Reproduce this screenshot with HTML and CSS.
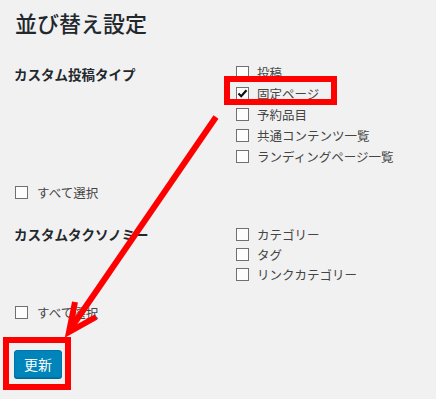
FILE: index.html
```html
<!DOCTYPE html>
<html lang="ja">
<head>
  <meta charset="UTF-8">
  <meta name="viewport" content="width=device-width, initial-scale=1.0">
  <title>並び替え設定</title>
  <link rel="stylesheet" href="styles.css">
</head>
<body>
  <div class="page">
    <h1 class="page-title">並び替え設定</h1>

    <!-- 投稿タイプ -->
    <div class="setting setting-types">
      <div class="setting-label">カスタム投稿タイプ</div>
      <ul class="choices">
        <li><span class="box"></span>投稿</li>
        <li><span class="box checked"><svg viewBox="0 0 13 13" width="13" height="13"><path d="M2.5 6.5 L5.2 9.2 L10.5 3.2" fill="none" stroke="#111" stroke-width="2.2"/></svg></span>固定ページ</li>
        <li><span class="box"></span>予約品目</li>
        <li><span class="box"></span>共通コンテンツ一覧</li>
        <li><span class="box"></span>ランディングページ一覧</li>
      </ul>
    </div>
    <div class="select-all select-all-types"><span class="box"></span>すべて選択</div>

    <!-- タクソノミー -->
    <div class="setting setting-tax">
      <div class="setting-label">カスタムタクソノミー</div>
      <ul class="choices">
        <li><span class="box"></span>カテゴリー</li>
        <li><span class="box"></span>タグ</li>
        <li><span class="box"></span>リンクカテゴリー</li>
      </ul>
    </div>
    <div class="select-all select-all-tax"><span class="box"></span>すべて選択</div>

    <button class="submit">更新</button>

    <!-- 注釈 -->
    <svg class="annotations" viewBox="0 0 436 399" width="436" height="399">
      <rect x="227" y="79" width="107" height="23" fill="none" stroke="#ff0000" stroke-width="6"/>
      <rect x="6" y="340" width="62" height="47" fill="none" stroke="#ff0000" stroke-width="6"/>
      <line x1="216" y1="117" x2="71" y2="328" stroke="#ff0000" stroke-width="6"/>
      <polyline points="75,302 69,332 96,317" fill="none" stroke="#ff0000" stroke-width="6" stroke-linejoin="miter"/>
    </svg>
  </div>
</body>
</html>
```

FILE: styles.css
```css
* {
  margin: 0;
  padding: 0;
  box-sizing: border-box;
}

body {
  font-family: "Noto Sans CJK JP", "Liberation Sans", sans-serif;
  background: #f1f1f1;
  color: #444;
}

.page {
  position: relative;
  width: 436px;
  height: 399px;
  padding: 8px 14px 0;
  overflow: hidden;
}

.page-title {
  font-size: 22px;
  line-height: 28px;
  font-weight: 500;
  color: #23282d;
  padding-left: 1px;
}

.setting {
  display: flex;
}

.setting-types {
  margin-top: 26px;
}

.setting-tax {
  margin-top: 22px;
}

.setting-label {
  width: 222px;
  font-size: 13.5px;
  font-weight: 700;
  color: #23282d;
  line-height: 20px;
}

.setting-types .setting-label {
  padding-top: 2px;
}

.choices {
  list-style: none;
}

.choices li {
  display: flex;
  align-items: center;
  gap: 8px;
  height: 20px;
  font-size: 12.5px;
  color: #444;
}

.setting-types .choices li {
  height: 21px;
}

.box {
  width: 13px;
  height: 13px;
  border: 1px solid #707070;
  background: #fdfdfd;
  flex-shrink: 0;
  display: flex;
}

.box svg {
  margin: -1px;
}

.select-all {
  display: flex;
  align-items: center;
  gap: 9px;
  height: 20px;
  padding-left: 1px;
  font-size: 12.5px;
  color: #444;
}

.select-all-types {
  margin-top: 15px;
}

.select-all-tax {
  margin-top: 18px;
}

.submit {
  display: block;
  margin-top: 28px;
  width: 48px;
  height: 28px;
  background: #0085ba;
  border: 1px solid #0073aa;
  border-radius: 3px;
  box-shadow: 0 1px 0 #006799;
  color: #fff;
  font-family: inherit;
  font-size: 14px;
}

/* 注釈レイヤー */
.annotations {
  position: absolute;
  top: 0;
  left: 0;
  pointer-events: none;
}
```
